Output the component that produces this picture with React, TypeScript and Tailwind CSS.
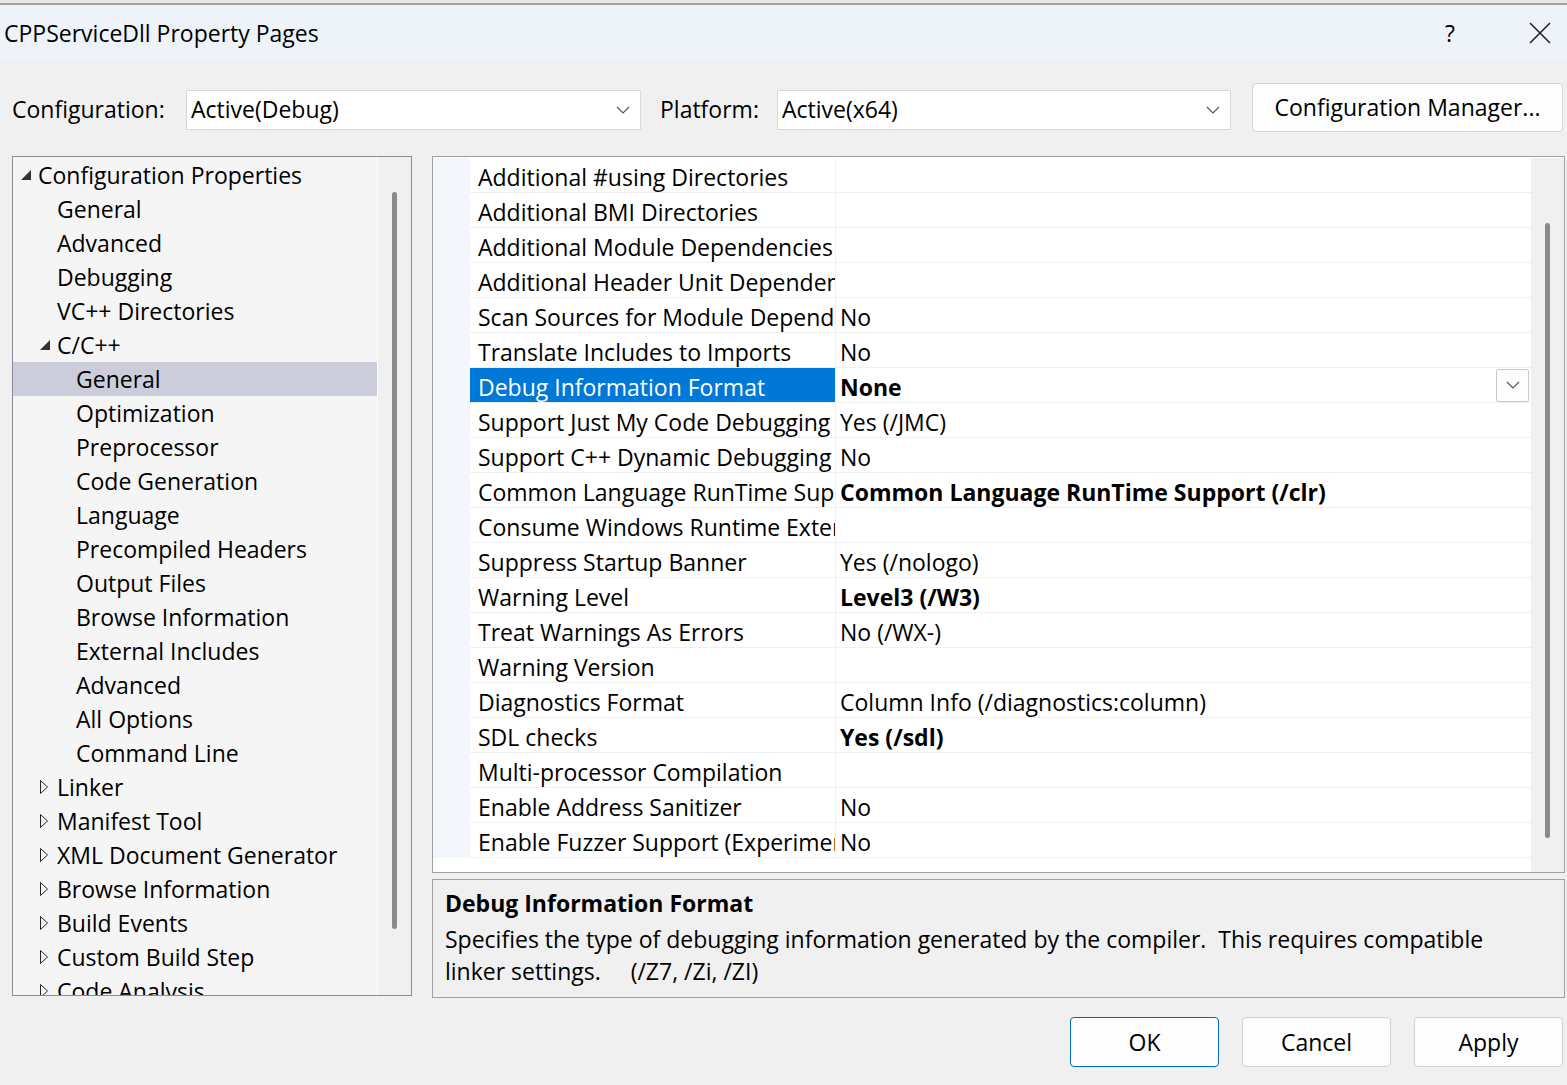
import React from 'react';

type TreeItem = {
  label: string;
  level: number;
  arrow?: 'open' | 'closed';
  selected?: boolean;
};

const tree: TreeItem[] = [
  { label: 'Configuration Properties', level: 0, arrow: 'open' },
  { label: 'General', level: 1 },
  { label: 'Advanced', level: 1 },
  { label: 'Debugging', level: 1 },
  { label: 'VC++ Directories', level: 1 },
  { label: 'C/C++', level: 1, arrow: 'open' },
  { label: 'General', level: 2, selected: true },
  { label: 'Optimization', level: 2 },
  { label: 'Preprocessor', level: 2 },
  { label: 'Code Generation', level: 2 },
  { label: 'Language', level: 2 },
  { label: 'Precompiled Headers', level: 2 },
  { label: 'Output Files', level: 2 },
  { label: 'Browse Information', level: 2 },
  { label: 'External Includes', level: 2 },
  { label: 'Advanced', level: 2 },
  { label: 'All Options', level: 2 },
  { label: 'Command Line', level: 2 },
  { label: 'Linker', level: 1, arrow: 'closed' },
  { label: 'Manifest Tool', level: 1, arrow: 'closed' },
  { label: 'XML Document Generator', level: 1, arrow: 'closed' },
  { label: 'Browse Information', level: 1, arrow: 'closed' },
  { label: 'Build Events', level: 1, arrow: 'closed' },
  { label: 'Custom Build Step', level: 1, arrow: 'closed' },
  { label: 'Code Analysis', level: 1, arrow: 'closed' },
];

type Prop = { name: string; value?: string; bold?: boolean; selected?: boolean };

const props: Prop[] = [
  { name: 'Additional #using Directories' },
  { name: 'Additional BMI Directories' },
  { name: 'Additional Module Dependencies' },
  { name: 'Additional Header Unit Dependencies' },
  { name: 'Scan Sources for Module Dependencies', value: 'No' },
  { name: 'Translate Includes to Imports', value: 'No' },
  { name: 'Debug Information Format', value: 'None', bold: true, selected: true },
  { name: 'Support Just My Code Debugging', value: 'Yes (/JMC)' },
  { name: 'Support C++ Dynamic Debugging', value: 'No' },
  { name: 'Common Language RunTime Support', value: 'Common Language RunTime Support (/clr)', bold: true },
  { name: 'Consume Windows Runtime Extension' },
  { name: 'Suppress Startup Banner', value: 'Yes (/nologo)' },
  { name: 'Warning Level', value: 'Level3 (/W3)', bold: true },
  { name: 'Treat Warnings As Errors', value: 'No (/WX-)' },
  { name: 'Warning Version' },
  { name: 'Diagnostics Format', value: 'Column Info (/diagnostics:column)' },
  { name: 'SDL checks', value: 'Yes (/sdl)', bold: true },
  { name: 'Multi-processor Compilation' },
  { name: 'Enable Address Sanitizer', value: 'No' },
  { name: 'Enable Fuzzer Support (Experimental)', value: 'No' },
];

const Chevron = () => (
  <svg width="14" height="8" viewBox="0 0 14 8">
    <polyline points="1,1 7,7 13,1" fill="none" stroke="#555" strokeWidth="1.2" />
  </svg>
);

const Arrow = ({ kind }: { kind?: 'open' | 'closed' }) => {
  if (kind === 'open') {
    return (
      <svg width="12" height="12" viewBox="0 0 12 12">
        <polygon points="11,1 11,11 1,11" fill="#333" />
      </svg>
    );
  }
  if (kind === 'closed') {
    return (
      <svg width="10" height="16" viewBox="0 0 10 16">
        <polygon points="1.5,1.5 8.5,8 1.5,14.5" fill="none" stroke="#222" strokeWidth="1" />
      </svg>
    );
  }
  return null;
};

const Combo = ({ value, width }: { value: string; width: string }) => (
  <div className={`mt-[5px] flex h-[40px] items-center justify-between border border-[#d9d9d9] bg-white pl-1 pr-[10px] ${width}`}>
    <span>{value}</span>
    <Chevron />
  </div>
);

const DialogButton = ({ label, primary }: { label: string; primary?: boolean }) => (
  <button
    className={`flex h-[50px] w-[149px] items-center justify-center rounded-[4px] border bg-[#fdfdfd] ${
      primary ? 'border-[#0067c0]' : 'border-[#d0d0d0]'
    }`}
  >
    {label}
  </button>
);

export default function App() {
  return (
    <div
      className="flex h-[1085px] w-[1567px] flex-col overflow-hidden bg-[#f0f0f0] text-[23px] text-black"
      style={{ fontFamily: '"Open Sans", "Noto Sans", sans-serif' }}
    >
      {/* sliver of the window behind the dialog */}
      <div className="h-[3px] overflow-hidden bg-[#e6e6e6] pl-[2px]">
        <div className="-mt-[26px] text-[30px] font-bold leading-[30px] tracking-[2px]">VE</div>
      </div>
      <div className="h-[2px] bg-[#a3a3a3]" />

      {/* title bar */}
      <div className="flex h-[56px] items-center bg-[#eef3f9] pl-1 pr-[16px]">
        <span className="flex-1">CPPServiceDll Property Pages</span>
        <span className="mr-[74px]">?</span>
        <svg width="22" height="22" viewBox="0 0 22 22">
          <path d="M1 1 L21 21 M21 1 L1 21" stroke="#222" strokeWidth="1.6" />
        </svg>
      </div>

      {/* configuration / platform selectors */}
      <div className="flex h-[95px] items-start pl-[12px] pt-[21px]">
        <div className="flex h-[50px] items-center">
          <span className="mt-[5px] w-[174px]">Configuration:</span>
          <Combo value="Active(Debug)" width="w-[455px]" />
          <span className="ml-[19px] mt-[5px] w-[117px]">Platform:</span>
          <Combo value="Active(x64)" width="w-[454px]" />
          <button className="ml-[21px] flex h-[49px] w-[311px] items-center justify-center rounded-[4px] border border-[#d5d5d5] bg-[#fdfdfd]">
            Configuration Manager...
          </button>
        </div>
      </div>

      <div className="flex pl-[12px]">
        {/* category tree */}
        <div className="flex h-[840px] w-[400px] border border-[#8b8b98] bg-[#f5f5f5]">
          <div className="w-[364px] overflow-hidden pt-[1px]">
            {tree.map((item, i) => (
              <div
                key={i}
                className={`flex h-[34px] items-center whitespace-nowrap ${item.selected ? 'bg-[#cbcdda]' : ''}`}
                style={{ paddingLeft: 7 + item.level * 19 }}
              >
                <span className="flex w-[18px] items-center">
                  <Arrow kind={item.arrow} />
                </span>
                <span>{item.label}</span>
              </div>
            ))}
          </div>
          <div className="flex flex-1 justify-center border-l border-white bg-[#f0f0f0] pt-[35px]">
            <div className="h-[737px] w-[5px] rounded-full bg-[#8a8a8a]" />
          </div>
        </div>

        <div className="ml-[20px] flex w-[1133px] flex-col">
          {/* property grid */}
          <div className="flex h-[717px] border border-[#a0a0a0] bg-white pt-px">
            <div className="flex-1">
              {props.map((p, i) => (
                <div key={i} className="flex h-[35px]">
                  <div className="w-[37px] bg-[#f3f6fb]" />
                  <div className="flex flex-1 border-b border-[#eef0f4]">
                    <div
                      className={`flex w-[366px] items-center overflow-hidden whitespace-nowrap border-r border-[#eef0f4] pl-[8px] pt-[5px] ${
                        p.selected ? 'bg-[#0078d7] text-white' : ''
                      }`}
                    >
                      {p.name}
                    </div>
                    <div className={`flex flex-1 items-center justify-between pl-[4px] pr-[2px] ${p.bold ? 'font-bold' : ''}`}>
                      <span className="pt-[5px]">{p.value}</span>
                      {p.selected && (
                        <div className="flex h-[33px] w-[33px] items-center justify-center rounded-[2px] border border-[#c8c8c8] bg-[#fdfdfd]">
                          <Chevron />
                        </div>
                      )}
                    </div>
                  </div>
                </div>
              ))}
            </div>
            <div className="flex w-[33px] justify-center bg-[#f0f0f0] pt-[65px]">
              <div className="h-[615px] w-[5px] rounded-full bg-[#8a8a8a]" />
            </div>
          </div>

          {/* description */}
          <div className="mt-[6px] h-[119px] border border-[#a0a0a0] bg-[#f0f0f0] px-[12px] pt-[7px]">
            <div className="font-bold leading-[32px]">Debug Information Format</div>
            <div className="mt-[4px] leading-[32px]">
              Specifies the type of debugging information generated by the compiler.&nbsp; This requires compatible
              <br />
              linker settings.&nbsp;&nbsp;&nbsp;&nbsp; (/Z7, /Zi, /ZI)
            </div>
          </div>
        </div>
      </div>

      {/* dialog buttons */}
      <div className="flex justify-end gap-[23px] pr-[4px] pt-[19px]">
        <DialogButton label="OK" primary />
        <DialogButton label="Cancel" />
        <DialogButton label="Apply" />
      </div>
    </div>
  );
}
